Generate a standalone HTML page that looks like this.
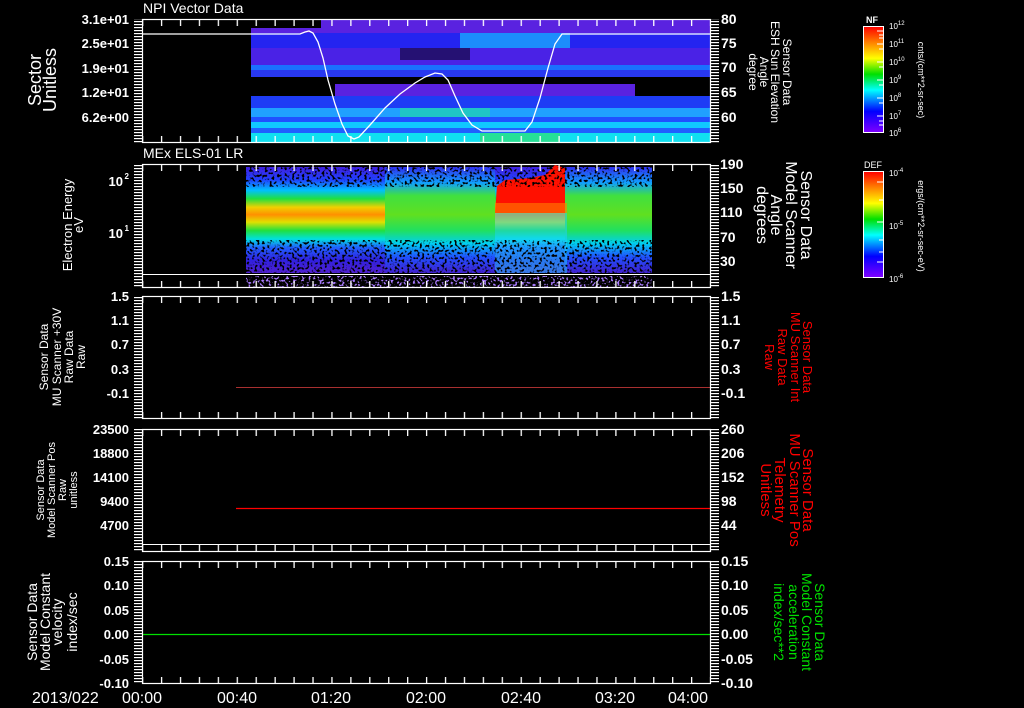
<!DOCTYPE html>
<html><head><meta charset="utf-8"><style>
html,body{margin:0;padding:0;background:#000;width:1024px;height:708px;overflow:hidden}
svg{display:block}
text{font-family:"Liberation Sans",sans-serif}
</style></head><body>
<svg width="1024" height="708" viewBox="0 0 1024 708" xmlns="http://www.w3.org/2000/svg" fill="#fff">
<defs>
<pattern id="tx" x="142" y="0" width="18.93" height="10" patternUnits="userSpaceOnUse"><rect x="0" y="0" width="1.3" height="10" fill="#fff"/></pattern>
<pattern id="ty" x="0" y="0" width="10" height="3" patternUnits="userSpaceOnUse"><rect x="0" y="0" width="10" height="1.2" fill="#fff"/></pattern>
<linearGradient id="rb" x1="0" y1="0" x2="0" y2="1">
<stop offset="0" stop-color="#ff0000"/><stop offset="0.15" stop-color="#ff8000"/><stop offset="0.3" stop-color="#ffff00"/><stop offset="0.45" stop-color="#00e000"/><stop offset="0.6" stop-color="#00ffff"/><stop offset="0.8" stop-color="#0000ff"/><stop offset="1" stop-color="#8000ff"/></linearGradient>
<linearGradient id="els" x1="0" y1="0" x2="0" y2="1">
<stop offset="0" stop-color="#4020e0"/><stop offset="0.12" stop-color="#2040ff"/><stop offset="0.22" stop-color="#00c0ff"/><stop offset="0.3" stop-color="#20e040"/><stop offset="0.38" stop-color="#f0d000"/><stop offset="0.45" stop-color="#ff9000"/><stop offset="0.52" stop-color="#e0e000"/><stop offset="0.6" stop-color="#20e040"/><stop offset="0.68" stop-color="#00e0e0"/><stop offset="0.76" stop-color="#2060ff"/><stop offset="0.88" stop-color="#3020e0"/><stop offset="1" stop-color="#5020d0"/></linearGradient>
<linearGradient id="els2" x1="0" y1="0" x2="0" y2="1">
<stop offset="0" stop-color="#3030f0"/><stop offset="0.15" stop-color="#10a0ff"/><stop offset="0.27" stop-color="#40e040"/><stop offset="0.45" stop-color="#60e020"/><stop offset="0.6" stop-color="#20e060"/><stop offset="0.72" stop-color="#00d0f0"/><stop offset="0.85" stop-color="#2050ff"/><stop offset="1" stop-color="#4020d0"/></linearGradient>
<filter id="spk" x="0" y="0" width="1" height="1" filterUnits="objectBoundingBox">
<feTurbulence type="fractalNoise" baseFrequency="0.4 0.4" numOctaves="1" seed="3"/>
<feColorMatrix type="matrix" values="0 0 0 0 0  0 0 0 0 0  0 0 0 0 0  8 0 0 0 -4.2"/>
</filter>
<filter id="spk2" x="0" y="0" width="1" height="1" filterUnits="objectBoundingBox">
<feTurbulence type="fractalNoise" baseFrequency="0.45 0.45" numOctaves="1" seed="7"/>
<feColorMatrix type="matrix" values="0 0 0 0 0.4  0 0 0 0 0.2  0 0 0 0 1  9 0 0 0 -4.8"/>
</filter>
</defs>

<!-- Panel 1 spectrogram -->
<g>
<rect x="251" y="20" width="459" height="13" fill="#5a22e0"/>
<rect x="251" y="20" width="70" height="8" fill="#000"/>
<rect x="251" y="33" width="459" height="15" fill="#2424f0"/>
<rect x="251" y="48" width="459" height="17" fill="#4a22e6"/>
<rect x="251" y="65" width="459" height="5" fill="#1a70ff"/>
<rect x="251" y="70" width="459" height="7" fill="#2838f0"/>
<rect x="251" y="77" width="459" height="19" fill="#000"/>
<rect x="335" y="84" width="300" height="12" fill="#5a22e0"/>
<rect x="251" y="96" width="459" height="12" fill="#1e3cf5"/>
<rect x="251" y="108" width="459" height="9" fill="#20a0ff"/>
<rect x="251" y="117" width="459" height="5" fill="#2050ff"/>
<rect x="251" y="122" width="459" height="6" fill="#10c8ff"/>
<rect x="251" y="128" width="459" height="5" fill="#2060ff"/>
<rect x="251" y="133" width="459" height="9" fill="#10e0f0"/>
<rect x="460" y="33" width="110" height="15" fill="#1aa8ff" opacity="0.8"/>
<rect x="400" y="108" width="90" height="9" fill="#20e0a0" opacity="0.6"/>
<rect x="480" y="133" width="80" height="9" fill="#30e070" opacity="0.7"/>
<rect x="400" y="48" width="70" height="12" fill="#000" opacity="0.5"/>
</g>
<polyline fill="none" stroke="#fff" stroke-width="1.3" points="142,34 300,34 305,32 309,31 313,33 318,42 323,58 328,80 335,104 342,124 348,136 354,139 359,137 370,125 385,108 400,94 415,83 425,77 435,73 442,74 448,80 455,96 463,113 472,125 482,131 500,131 525,131 532,122 540,98 548,68 555,44 562,34 710,34"/>

<!-- Panel 2 spectrogram -->
<rect x="246" y="167" width="406" height="106" fill="url(#els)"/>
<rect x="385" y="167" width="110" height="106" fill="url(#els2)"/>
<rect x="565" y="167" width="87" height="106" fill="url(#els2)"/>
<path d="M495 213 L497 186 L505 180 L530 178 L545 175 L555 165 L565 168 L565 213 Z" fill="#ff1000"/>
<rect x="495" y="203" width="72" height="10" fill="#ff8000" opacity="0.6"/>
<rect x="495" y="213" width="72" height="60" fill="#20d0ff" opacity="0.5"/>
<rect x="246" y="167" width="406" height="20" fill="#000" filter="url(#spk)"/>
<rect x="246" y="240" width="406" height="33" fill="#000" filter="url(#spk)"/>
<rect x="246" y="276" width="406" height="11" fill="#000" filter="url(#spk2)"/>
<line x1="142" y1="274.5" x2="710" y2="274.5" stroke="#fff" stroke-width="1"/>

<!-- lines in lower panels -->
<line x1="236" y1="387.5" x2="710" y2="387.5" stroke="#a83030" stroke-width="1"/>
<line x1="236" y1="508.5" x2="710" y2="508.5" stroke="#ff0000" stroke-width="1.2"/>
<line x1="142" y1="634.5" x2="710" y2="634.5" stroke="#00e000" stroke-width="1.2"/>
<line x1="142" y1="544.5" x2="710" y2="544.5" stroke="#fff" stroke-width="1"/>

<!-- frames -->
<g fill="none" stroke="#fff" stroke-width="1.2">
<rect x="142.5" y="19.5" width="568" height="123"/>
<rect x="142.5" y="164.5" width="568" height="123"/>
<rect x="142.5" y="296.5" width="568" height="122"/>
<rect x="142.5" y="429.5" width="568" height="122"/>
<rect x="142.5" y="561.5" width="568" height="122"/>
</g>
<g fill="url(#tx)">
<rect x="142" y="20" width="569" height="6"/><rect x="142" y="136" width="569" height="6"/>
<rect x="142" y="165" width="569" height="6"/><rect x="142" y="281" width="569" height="6"/>
<rect x="142" y="297" width="569" height="6"/><rect x="142" y="412" width="569" height="6"/>
<rect x="142" y="430" width="569" height="6"/><rect x="142" y="545" width="569" height="6"/>
<rect x="142" y="562" width="569" height="6"/><rect x="142" y="677" width="569" height="6"/>
</g>
<g fill="url(#ty)">
<rect x="134" y="19" width="8" height="124"/><rect x="711" y="19" width="8" height="124"/>
<rect x="134" y="164" width="8" height="124"/><rect x="711" y="164" width="8" height="124"/>
<rect x="134" y="296" width="8" height="123"/><rect x="711" y="296" width="8" height="123"/>
<rect x="134" y="429" width="8" height="123"/><rect x="711" y="429" width="8" height="123"/>
<rect x="134" y="561" width="8" height="123"/><rect x="711" y="561" width="8" height="123"/>
</g>

<text x="143" y="13" font-size="14">NPI Vector Data</text>
<text x="143" y="158" font-size="14">MEx ELS-01 LR</text>

<g font-size="13" text-anchor="end" font-weight="bold">
<text x="129" y="24">3.1e+01</text><text x="129" y="48">2.5e+01</text><text x="129" y="73">1.9e+01</text><text x="129" y="97">1.2e+01</text><text x="129" y="122">6.2e+00</text>
<text x="123" y="186">10</text><text x="129" y="179" font-size="8">2</text>
<text x="123" y="238">10</text><text x="129" y="231" font-size="8">1</text>
<text x="129" y="301">1.5</text><text x="129" y="325">1.1</text><text x="129" y="349">0.7</text><text x="129" y="374">0.3</text><text x="129" y="398">-0.1</text>
<text x="129" y="434">23500</text><text x="129" y="458">18800</text><text x="129" y="482">14100</text><text x="129" y="506">9400</text><text x="129" y="530">4700</text>
<text x="129" y="566">0.15</text><text x="129" y="590">0.10</text><text x="129" y="615">0.05</text><text x="129" y="639">0.00</text><text x="129" y="664">-0.05</text><text x="129" y="688">-0.10</text>
</g>
<g font-size="14" font-weight="bold">
<text x="721" y="24">80</text><text x="721" y="48">75</text><text x="721" y="72">70</text><text x="721" y="97">65</text><text x="721" y="122">60</text>
<text x="720" y="169">190</text><text x="720" y="193">150</text><text x="720" y="217">110</text><text x="720" y="242">70</text><text x="720" y="266">30</text>
<text x="721" y="301">1.5</text><text x="721" y="325">1.1</text><text x="721" y="349">0.7</text><text x="721" y="374">0.3</text><text x="721" y="398">-0.1</text>
<text x="721" y="434">260</text><text x="721" y="458">206</text><text x="721" y="482">152</text><text x="721" y="506">98</text><text x="721" y="530">44</text>
<text x="721" y="566">0.15</text><text x="721" y="590">0.10</text><text x="721" y="615">0.05</text><text x="721" y="639">0.00</text><text x="721" y="664">-0.05</text><text x="721" y="688">-0.10</text>
</g>
<g font-size="16">
<text x="32" y="703">2013/022</text>
<text x="142" y="703" text-anchor="middle">00:00</text>
<text x="237" y="703" text-anchor="middle">00:40</text>
<text x="331" y="703" text-anchor="middle">01:20</text>
<text x="426" y="703" text-anchor="middle">02:00</text>
<text x="521" y="703" text-anchor="middle">02:40</text>
<text x="615" y="703" text-anchor="middle">03:20</text>
<text x="688" y="703" text-anchor="middle">04:00</text>
</g>

<g text-anchor="middle">
<text font-size="18" transform="translate(41,80) rotate(-90)">Sector</text>
<text font-size="18" transform="translate(56,80) rotate(-90)">Unitless</text>
<text font-size="13" transform="translate(72,225) rotate(-90)">Electron Energy</text>
<text font-size="13" transform="translate(83,225) rotate(-90)">eV</text>
<text font-size="12" transform="translate(48,357) rotate(-90)">Sensor Data</text>
<text font-size="12" transform="translate(61,357) rotate(-90)">MU Scanner +30V</text>
<text font-size="12" transform="translate(73,357) rotate(-90)">Raw Data</text>
<text font-size="12" transform="translate(85,357) rotate(-90)">Raw</text>
<text font-size="11" transform="translate(44,490) rotate(-90)">Sensor Data</text>
<text font-size="11" transform="translate(55,490) rotate(-90)">Model Scanner Pos</text>
<text font-size="11" transform="translate(66,490) rotate(-90)">Raw</text>
<text font-size="11" transform="translate(77,490) rotate(-90)">unitless</text>
<text font-size="14" transform="translate(37,622) rotate(-90)">Sensor Data</text>
<text font-size="14" transform="translate(50,622) rotate(-90)">Model Constant</text>
<text font-size="14" transform="translate(62,622) rotate(-90)">velocity</text>
<text font-size="14" transform="translate(77,622) rotate(-90)">index/sec</text>
</g>
<g text-anchor="middle">
<text font-size="12" transform="translate(783,72) rotate(90)">Sensor Data</text>
<text font-size="12" transform="translate(771,72) rotate(90)">ESH Sun Elevation</text>
<text font-size="12" transform="translate(760,72) rotate(90)">Angle</text>
<text font-size="12" transform="translate(749,72) rotate(90)">degree</text>
<text font-size="16" transform="translate(801,215) rotate(90)">Sensor Data</text>
<text font-size="16" transform="translate(786,215) rotate(90)">Model Scanner</text>
<text font-size="16" transform="translate(771,215) rotate(90)">Angle</text>
<text font-size="16" transform="translate(757,215) rotate(90)">degrees</text>
</g>
<g text-anchor="middle" fill="#ff0000">
<text font-size="13" transform="translate(803,357) rotate(90)">Sensor Data</text>
<text font-size="13" transform="translate(791,357) rotate(90)">MU Scanner Int</text>
<text font-size="13" transform="translate(778,357) rotate(90)">Raw Data</text>
<text font-size="13" transform="translate(765,357) rotate(90)">Raw</text>
<text font-size="15" transform="translate(803,490) rotate(90)">Sensor Data</text>
<text font-size="15" transform="translate(790,490) rotate(90)">MU Scanner Pos</text>
<text font-size="15" transform="translate(775,490) rotate(90)">Telemetry</text>
<text font-size="15" transform="translate(761,490) rotate(90)">Unitless</text>
</g>
<g text-anchor="middle" fill="#00e000">
<text font-size="14" transform="translate(815,622) rotate(90)">Sensor Data</text>
<text font-size="14" transform="translate(802,622) rotate(90)">Model Constant</text>
<text font-size="14" transform="translate(789,622) rotate(90)">acceleration</text>
<text font-size="14" transform="translate(774,622) rotate(90)">index/sec**2</text>
</g>

<rect x="863.5" y="26.5" width="20" height="106" fill="url(#rb)" stroke="#fff" stroke-width="1"/>
<rect x="863.5" y="171.5" width="20" height="106" fill="url(#rb)" stroke="#fff" stroke-width="1"/>
<g stroke="#fff" stroke-width="1">
<line x1="877" y1="31" x2="883" y2="31"/><line x1="879" y1="35" x2="883" y2="35"/><line x1="879" y1="38" x2="883" y2="38"/><line x1="877" y1="44" x2="883" y2="44"/><line x1="879" y1="49" x2="883" y2="49"/><line x1="877" y1="62" x2="883" y2="62"/><line x1="879" y1="67" x2="883" y2="67"/><line x1="877" y1="80" x2="883" y2="80"/><line x1="879" y1="85" x2="883" y2="85"/><line x1="877" y1="98" x2="883" y2="98"/><line x1="879" y1="103" x2="883" y2="103"/><line x1="877" y1="116" x2="883" y2="116"/><line x1="879" y1="121" x2="883" y2="121"/><line x1="879" y1="125" x2="883" y2="125"/>
<line x1="877" y1="182" x2="883" y2="182"/><line x1="879" y1="200" x2="883" y2="200"/><line x1="877" y1="222" x2="883" y2="222"/><line x1="879" y1="240" x2="883" y2="240"/><line x1="879" y1="252" x2="883" y2="252"/><line x1="877" y1="262" x2="883" y2="262"/>
</g>
<text x="866" y="23" font-size="9" font-weight="bold">NF</text>
<text x="864" y="168" font-size="9">DEF</text>
<g font-size="8">
<text x="889" y="29">10<tspan font-size="6" dy="-4">12</tspan></text>
<text x="889" y="47">10<tspan font-size="6" dy="-4">11</tspan></text>
<text x="889" y="65">10<tspan font-size="6" dy="-4">10</tspan></text>
<text x="889" y="83">10<tspan font-size="6" dy="-4">9</tspan></text>
<text x="889" y="101">10<tspan font-size="6" dy="-4">8</tspan></text>
<text x="889" y="119">10<tspan font-size="6" dy="-4">7</tspan></text>
<text x="889" y="136">10<tspan font-size="6" dy="-4">6</tspan></text>
<text x="889" y="176">10<tspan font-size="6" dy="-4">-4</tspan></text>
<text x="889" y="229">10<tspan font-size="6" dy="-4">-5</tspan></text>
<text x="889" y="282">10<tspan font-size="6" dy="-4">-6</tspan></text>
</g>
<text font-size="9" text-anchor="middle" transform="translate(918,80) rotate(90)">cnts/(cm**2-sr-sec)</text>
<text font-size="9" text-anchor="middle" transform="translate(918,226) rotate(90)">ergs/(cm**2-sr-sec-eV)</text>
</svg>
</body></html>
